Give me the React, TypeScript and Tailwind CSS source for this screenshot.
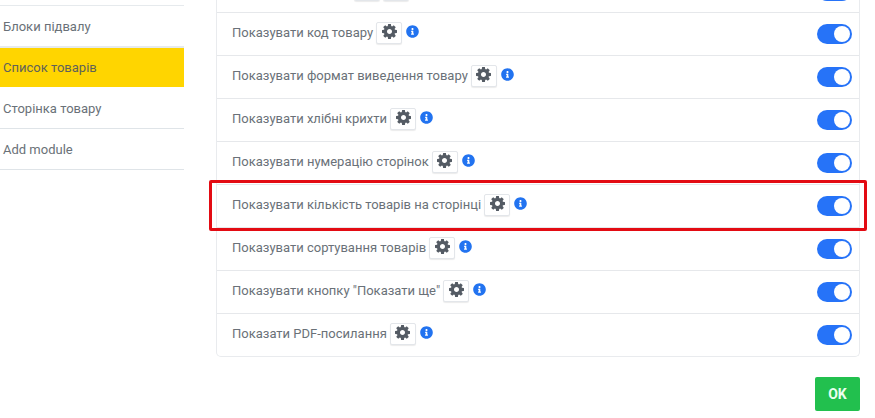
import { FaInfoCircle } from "react-icons/fa";

const rows = [
  "Показувати код товару",
  "Показувати формат виведення товару",
  "Показувати хлібні крихти",
  "Показувати нумерацію сторінок",
  "Показувати кількість товарів на сторінці",
  "Показувати сортування товарів",
  'Показувати кнопку "Показати ще"',
  "Показати PDF-посилання",
];

function Toggle() {
  return (
    <div className="flex h-5 w-[35px] items-center justify-end rounded-full bg-[#2673f8] pr-[2px]">
      <div className="size-4 rounded-full bg-white" />
    </div>
  );
}

function Cog() {
  return (
    <svg viewBox="128 128 1536 1536" className="mb-[3px] size-[15px]" fill="currentColor">
      <path d="M1152 896q0-106-75-181t-181-75-181 75-75 181 75 181 181 75 181-75 75-181zm512-109v222q0 12-8 23t-20 13l-185 28q-19 54-39 91 35 50 107 138 10 12 10 25t-9 23q-27 37-99 108t-94 71q-12 0-26-9l-138-108q-44 23-91 38-16 136-29 186-7 28-36 28h-222q-14 0-24.5-8.5t-11.5-21.5l-28-184q-49-16-90-37l-141 107q-10 9-25 9-14 0-25-11-126-114-165-168-7-10-7-23 0-12 8-23 15-21 51-66.5t54-70.5q-27-50-41-99l-183-27q-13-2-21-12.5t-8-23.5v-222q0-12 8-23t19-13l186-28q14-46 39-92-40-57-107-138-10-12-10-24 0-10 9-23 26-36 98.5-107.5t94.5-71.5q13 0 26 10l138 107q44-23 91-38 16-136 29-186 7-28 36-28h222q14 0 24.5 8.5t11.5 21.5l28 184q49 16 90 37l142-107q9-9 24-9 13 0 25 10 129 119 165 170 7 8 7 22 0 12-8 23-15 21-51 66.5t-54 70.5q26 50 41 98l183 28q13 2 21 12.5t8 23.5z" />
    </svg>
  );
}

function GearButton() {
  return (
    <div className="flex h-[22px] w-[26px] items-center justify-center rounded-[2px] border border-[#e3e6ea] bg-white text-[#545b64] shadow-[0_1px_1px_rgba(0,0,0,0.08)]">
      <Cog />
    </div>
  );
}

export default function App() {
  return (
    <div className="relative flex h-[418px] w-[875px] overflow-hidden bg-white font-['Roboto',sans-serif] text-[13px] text-[#6a7178]">
      <div className="mt-[5px] w-[184px] shrink-0">
        <div className="flex h-[43px] items-center border-t border-b-2 border-[#e6eaed] pl-[3px] pt-[1px]">Блоки підвалу</div>
        <div className="flex h-[39px] items-center bg-[#ffd500] pl-[3px] text-[#5f6259]">Список товарів</div>
        <div className="flex h-[42px] items-center border-b border-[#dfe4e8] pl-[3px] pt-[2px]">Сторінка товару</div>
        <div className="flex h-[41px] items-center border-b border-[#dfe4e8] pl-[3px] pt-[1px]">Add module</div>
      </div>
      <div className="ml-[32px] w-[644px] shrink-0">
        <div className="-mt-[31px] rounded-b-[5px] border-x border-b border-[#e9ebee]">
          <div className="flex h-[43px] items-center pl-[15px] pr-[7px]">
            <div className="ml-[122px] mb-[1px] flex gap-[3px]">
              <GearButton />
              <GearButton />
            </div>
            <div className="ml-auto">
              <Toggle />
            </div>
          </div>
          {rows.map((label) => (
            <div key={label} className="flex h-[43px] items-center border-t border-[#e6e8eb] pl-[15px] pr-[7px]">
              <span className="mb-[2px]">{label}</span>
              <div className="mb-[2px] ml-[3px]">
                <GearButton />
              </div>
              <FaInfoCircle className="mb-[6px] ml-[4px] size-[13px] text-[#2273f0]" />
              <div className="ml-auto">
                <Toggle />
              </div>
            </div>
          ))}
        </div>
        <div className="mt-[20px] flex justify-end">
          <div className="flex h-[34px] w-[45px] items-center justify-center rounded-[2px] bg-[#22c04e] text-sm font-bold text-[#eafff0]">OK</div>
        </div>
      </div>
      <div className="absolute left-[209px] top-[180px] h-[51px] w-[658px] rounded-[2px] border-[3px] border-[#e30b13]" />
    </div>
  );
}
